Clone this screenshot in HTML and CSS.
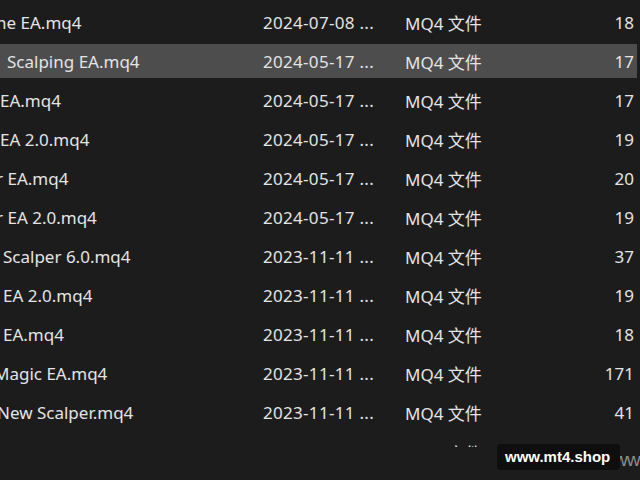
FILE: index.html
```html
<!DOCTYPE html>
<html lang="zh-CN">
<head>
<meta charset="utf-8">
<title>MQ4 文件</title>
<link rel="stylesheet" href="styles.css">
</head>
<body>
<div class="view">
  <div class="list">
    <div class="row"><div class="name ind-n4">ne EA.mq4</div><div class="date">2024-07-08 ...</div><div class="type">MQ4 文件</div><div class="size">18</div></div>
    <div class="row selected"><div class="name ind-7">Scalping EA.mq4</div><div class="date">2024-05-17 ...</div><div class="type">MQ4 文件</div><div class="size">17</div></div>
    <div class="row"><div class="name ind-0">EA.mq4</div><div class="date">2024-05-17 ...</div><div class="type">MQ4 文件</div><div class="size">17</div></div>
    <div class="row"><div class="name ind-0">EA 2.0.mq4</div><div class="date">2024-05-17 ...</div><div class="type">MQ4 文件</div><div class="size">19</div></div>
    <div class="row"><div class="name ind-n4">r EA.mq4</div><div class="date">2024-05-17 ...</div><div class="type">MQ4 文件</div><div class="size">20</div></div>
    <div class="row"><div class="name ind-n4">r EA 2.0.mq4</div><div class="date">2024-05-17 ...</div><div class="type">MQ4 文件</div><div class="size">19</div></div>
    <div class="row"><div class="name ind-3">Scalper 6.0.mq4</div><div class="date">2023-11-11 ...</div><div class="type">MQ4 文件</div><div class="size">37</div></div>
    <div class="row"><div class="name ind-3">EA 2.0.mq4</div><div class="date">2023-11-11 ...</div><div class="type">MQ4 文件</div><div class="size">19</div></div>
    <div class="row"><div class="name ind-3">EA.mq4</div><div class="date">2023-11-11 ...</div><div class="type">MQ4 文件</div><div class="size">18</div></div>
    <div class="row"><div class="name ind-n6">Magic EA.mq4</div><div class="date">2023-11-11 ...</div><div class="type">MQ4 文件</div><div class="size">171</div></div>
    <div class="row"><div class="name ind-n3">New Scalper.mq4</div><div class="date">2023-11-11 ...</div><div class="type">MQ4 文件</div><div class="size">41</div></div>
    <div class="row"><div class="name ind-3">Scalper 5.0.mq4</div><div class="date">2023-11-11 ...</div><div class="type">MQ4 文件</div><div class="size">11</div></div>
  </div>
  <div class="ghost">www</div>
  <div class="watermark">www.mt4.shop</div>
</div>
</body>
</html>
```
FILE: styles.css
```css
html, body {
  margin: 0;
  padding: 0;
  background: #1c1c1c;
}
.view {
  position: relative;
  width: 640px;
  height: 480px;
  overflow: hidden;
  background: #1c1c1c;
  font-family: "Noto Sans", "Noto Sans CJK SC", sans-serif;
  font-size: 17px;
  color: #e4e4e4;
}
.list {
  height: 442px;
  overflow: hidden;
  padding-top: 5px;
  display: flex;
  flex-direction: column;
  gap: 5.1px;
}
.row {
  flex: 0 0 34px;
  display: grid;
  grid-template-columns: 263px 142px 1fr 80px;
  align-items: center;
  margin-right: 3px;
}
.row.selected {
  background: #4d4d4d;
}
.name {
  white-space: nowrap;
  overflow: hidden;
}
.ind-0 { text-indent: 0; }
.ind-3 { text-indent: 3px; }
.ind-7 { text-indent: 7px; }
.ind-n3 { text-indent: -3px; }
.ind-n4 { text-indent: -4px; }
.ind-n6 { text-indent: -6px; }
.date {
  white-space: nowrap;
  letter-spacing: 0.3px;
}
.type {
  white-space: nowrap;
}
.size {
  text-align: right;
  padding-right: 3px;
}
.ghost {
  position: absolute;
  left: 614px;
  top: 449px;
  font-family: "Liberation Sans", sans-serif;
  font-size: 19px;
  color: #8c8c8c;
  letter-spacing: -1px;
}
.watermark {
  position: absolute;
  left: 497px;
  top: 444px;
  width: 123px;
  height: 26px;
  box-sizing: border-box;
  padding-left: 8px;
  background: #0e0e0e;
  border-radius: 4px;
  font-family: "Liberation Sans", sans-serif;
  font-weight: bold;
  font-size: 15px;
  line-height: 26px;
  color: #ffffff;
}
```
